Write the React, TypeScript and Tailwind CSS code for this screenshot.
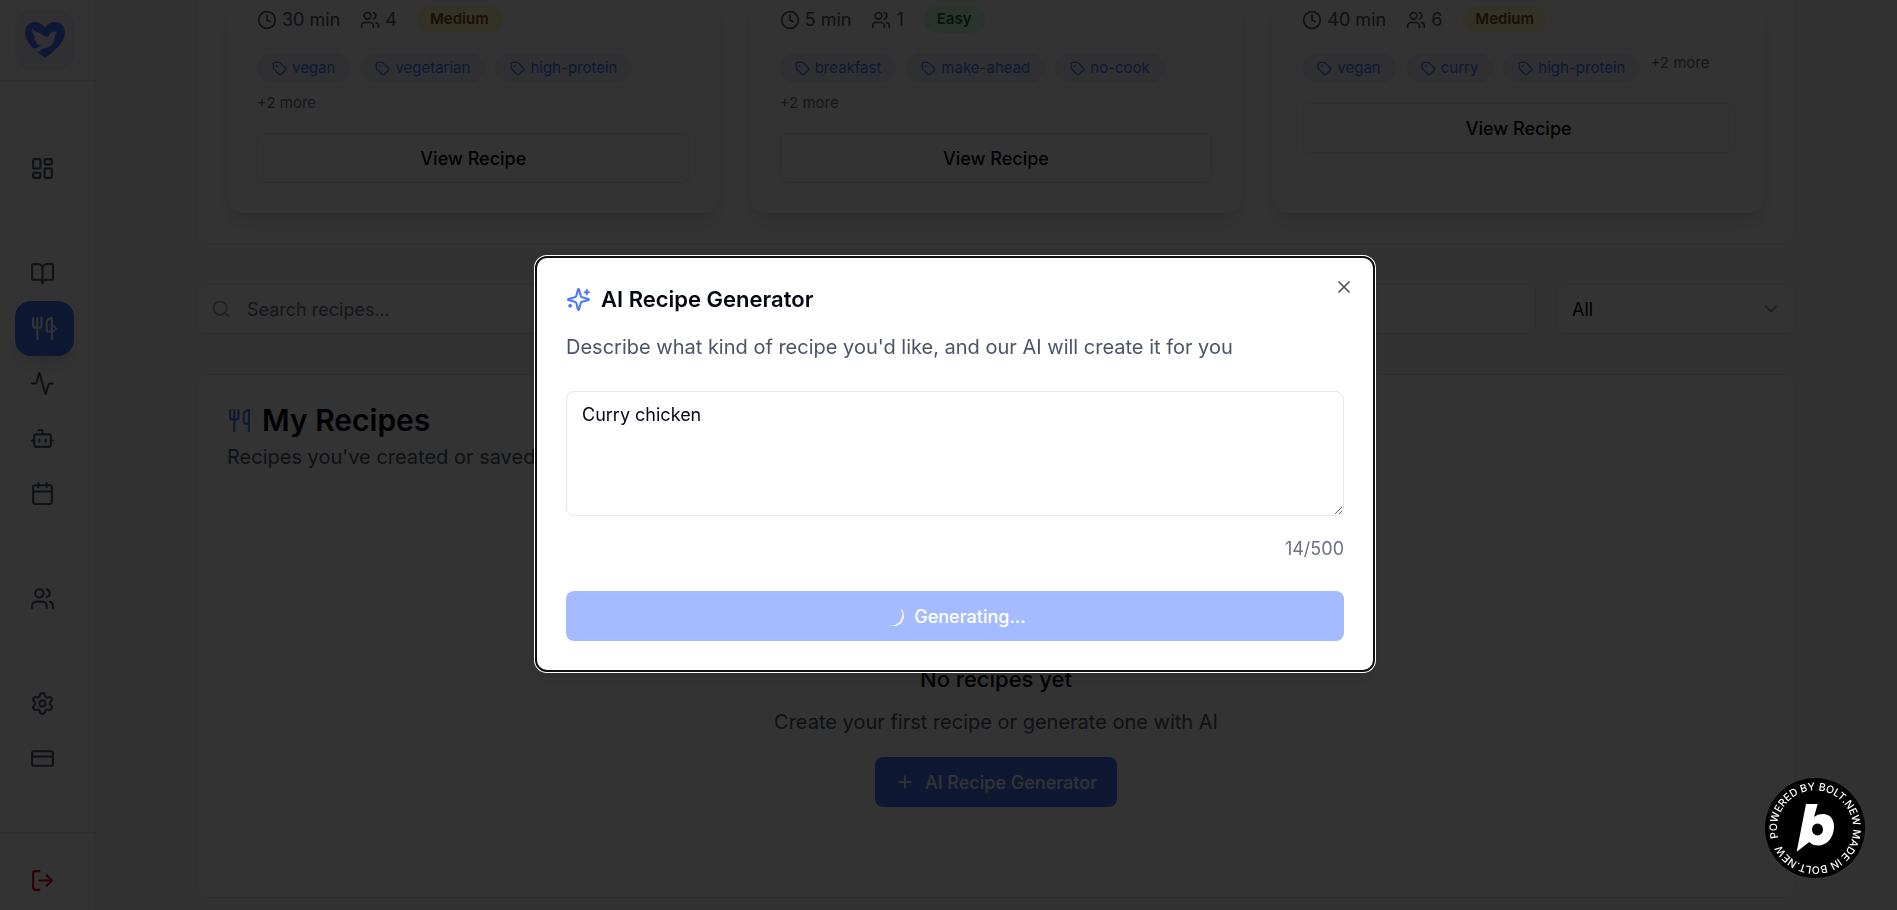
import React from "react";
import {
  Activity,
  BookOpen,
  Bot,
  Calendar,
  ChevronDown,
  ChevronRight,
  Clock,
  CreditCard,
  LayoutDashboard,
  LogOut,
  Plus,
  Search,
  Settings,
  Tag,
  Users,
  Utensils,
  X,
} from "lucide-react";

const recipes = [
  { time: "30 min", servings: 4, level: "Medium", tags: ["vegan", "vegetarian", "high-protein"] },
  { time: "5 min", servings: 1, level: "Easy", tags: ["breakfast", "make-ahead", "no-cook"] },
  { time: "40 min", servings: 6, level: "Medium", tags: ["vegan", "curry", "high-protein"] },
];

const navGroups = [
  [{ label: "Dashboard", icon: LayoutDashboard }],
  [
    { label: "Journal", icon: BookOpen },
    { label: "Recipes", icon: Utensils, active: true },
    { label: "Activity", icon: Activity },
    { label: "Assistant", icon: Bot },
    { label: "Calendar", icon: Calendar },
  ],
  [{ label: "Community", icon: Users }],
  [
    { label: "Settings", icon: Settings },
    { label: "Billing", icon: CreditCard },
  ],
];

function Logo() {
  return (
    <svg viewBox="0 0 40 36" className="w-10 h-9" aria-hidden="true">
      <path
        d="M20 5.500C22.500 2 26 0 30 0c6 0 10 4.500 10 10.500C40 21 28 30 20 36 12 30 0 21 0 10.500 0 4.500 4 0 10 0c4 0 7.500 2 10 5.500z"
        fill="#4b78ff"
      />
      <path
        d="M7 6.500c2 3 8 4 11.500 7 2 1.700 4.500 2 6-.5 1-2 1.500-3.500 4-3.500 1.800 0 2.500.8 3.500 2.500-2 0-2.500 1-2.500 3 0 5-2 9-7 10.500-5 1-6.500 2-9.500 4.500l-5-3.500c3 0 6.500-1 8-3.500-3-.2-5-1.500-5.500-3h2c-2.300-1-3.800-2.400-4-4h2C8.500 14 7 10.500 7 6.500z"
        fill="#edf1ff"
      />
    </svg>
  );
}

function SparklesIcon() {
  return (
    <svg
      viewBox="0 0 24 24"
      fill="none"
      stroke="currentColor"
      strokeWidth="2"
      strokeLinecap="round"
      strokeLinejoin="round"
      className="size-[25px] text-[#4b78ff]"
      aria-hidden="true"
    >
      <path d="M9.937 15.5A2 2 0 0 0 8.5 14.063l-6.135-1.582a.5.5 0 0 1 0-.962L8.5 9.936A2 2 0 0 0 9.937 8.5l1.582-6.135a.5.5 0 0 1 .963 0L14.063 8.5A2 2 0 0 0 15.5 9.937l6.135 1.581a.5.5 0 0 1 0 .964L15.5 14.063a2 2 0 0 0-1.437 1.437l-1.582 6.135a.5.5 0 0 1-.963 0z" />
      <path d="M20 3v4" />
      <path d="M22 5h-4" />
      <path d="M4 17v2" />
      <path d="M5 18H3" />
    </svg>
  );
}

function Sidebar() {
  return (
    <aside className="flex flex-col w-[95px] shrink-0 h-full bg-white border-r border-gray-200">
      <div className="h-[81px] shrink-0 pl-[15px] pt-[10px] border-b border-gray-200">
        <a href="#" aria-label="Home" className="flex items-center justify-center size-[60px] rounded-2xl bg-[#edf1ff]">
          <Logo />
        </a>
      </div>
      <nav className="flex flex-col gap-[50px] flex-1 px-[15px] pt-[60px]">
        {navGroups.map((group, i) => (
          <div key={i} className="flex flex-col">
            {group.map((item) => (
              <a
                key={item.label}
                href="#"
                aria-label={item.label}
                className={
                  item.active
                    ? "relative flex items-center h-[55px] w-[59px] pl-[15px] rounded-2xl bg-[#4b78ff] text-white shadow-[0_12px_19px_-4px_rgb(0_0_0/0.1),0_5px_8px_-5px_rgb(0_0_0/0.1)]"
                    : "relative flex items-center h-[55px] w-[59px] pl-[15px] rounded-2xl text-gray-600"
                }
              >
                <item.icon className="size-[25px] shrink-0" />
                {item.active && <ChevronRight className="absolute right-3 size-[15px]" />}
              </a>
            ))}
          </div>
        ))}
      </nav>
      <div className="h-[78px] shrink-0 px-[15px] pt-5 border-t border-gray-200">
        <button aria-label="Log out" className="flex items-center h-[55px] w-[59px] pl-[15px] text-red-600">
          <LogOut className="size-[25px]" />
        </button>
      </div>
    </aside>
  );
}

function RecipeCard({ recipe }) {
  return (
    <article className="rounded-b-2xl bg-white px-[30px] pt-[6px] pb-[30px] shadow-[0_12px_19px_-4px_rgb(0_0_0/0.1),0_5px_8px_-5px_rgb(0_0_0/0.1)]">
      <div className="flex items-center gap-5 mb-5 text-[18px] leading-[25px] text-gray-600">
        <span className="flex items-center gap-[5px]">
          <Clock className="size-5" />
          {recipe.time}
        </span>
        <span className="flex items-center gap-[5px]">
          <Users className="size-5" />
          {recipe.servings}
        </span>
        <span
          className={
            recipe.level === "Easy"
              ? "rounded-full px-[13px] h-[27px] text-[15px] font-semibold bg-[#dcfce7] text-[#166534]"
              : "rounded-full px-[13px] h-[27px] text-[15px] font-semibold bg-[#fef9c3] text-[#854d0e]"
          }
        >
          {recipe.level}
        </span>
      </div>
      <div className="flex flex-wrap gap-[10px] mb-5 text-[15px] leading-5">
        {recipe.tags.map((tag) => (
          <span key={tag} className="flex items-center gap-[5px] h-[30px] px-[15px] rounded-full bg-[#edf1ff] text-[#4b78ff]">
            <Tag className="size-[15px]" />
            {tag}
          </span>
        ))}
        <span className="text-gray-500">+2 more</span>
      </div>
      <button className="w-full h-[50px] rounded-lg border border-gray-200 text-[18px] font-medium">View Recipe</button>
    </article>
  );
}

function BoltBadge() {
  return (
    <a href="#" aria-label="Powered by Bolt.new" className="fixed right-8 bottom-8 z-20 size-[100px]">
      <svg viewBox="0 0 200 200" className="size-full">
        <circle cx="100" cy="100" r="100" fill="#000" />
        <path id="ring" d="M26.600 119.700A76 76 0 1 1 27.500 122.900" fill="none" />
        <text fill="#fff" className="font-['Inter'] text-[21px] font-medium">
          <textPath href="#ring">POWERED BY BOLT.NEW MADE IN BOLT.NEW</textPath>
        </text>
        <path
          d="M82 52h23.400l-7.400 26c5-4 11-6 18-6 14 0 22 10 22 25 0 22-14 38-32 38-7 0-13-2-17.400-7l-25.200 19.400z"
          fill="#fff"
        />
        <ellipse cx="105" cy="103" rx="11" ry="12" fill="#000" />
      </svg>
    </a>
  );
}

function GeneratorDialog() {
  return (
    <div className="fixed inset-0 z-10 flex items-center justify-center bg-black/80 pl-[13px] pt-[18px]">
      <div
        role="dialog"
        aria-labelledby="dialog-title"
        className="relative flex flex-col w-full max-w-[840px] rounded-xl border-2 border-[#101014] bg-white p-[29px] shadow-lg ring-1 ring-white"
      >
        <h2 id="dialog-title" className="flex items-center gap-[10px] text-[22px] leading-[25px] font-semibold">
          <SparklesIcon />
          AI Recipe Generator
        </h2>
        <p className="mt-5 text-xl leading-[30px] text-gray-600">
          Describe what kind of recipe you'd like, and our AI will create it for you
        </p>
        <textarea
          aria-label="Recipe description"
          defaultValue="Curry chicken"
          className="mt-[29px] w-full h-[125px] rounded-lg border border-gray-200 px-[15px] py-[10px] text-[18px] leading-[25px]"
        />
        <div className="mt-5 text-right text-[18px] leading-[25px] text-gray-500">14/500</div>
        <button
          disabled
          className="mt-[30px] flex items-center justify-center gap-[10px] h-[50px] rounded-lg bg-[#4b78ff] text-[18px] font-medium text-white opacity-50"
        >
          <span className="size-5 rounded-full border-b-2 border-white -rotate-60" />
          Generating...
        </button>
        <button aria-label="Close" className="absolute top-[19px] right-[19px] opacity-70">
          <X className="size-5" />
        </button>
      </div>
    </div>
  );
}

export default function App() {
  return (
    <div className="flex h-screen overflow-hidden bg-gray-50 text-gray-950 font-['Inter',sans-serif]">
      <Sidebar />
      <main className="flex-1 min-w-0">
        <div className="flex flex-col gap-10 max-w-[1600px] mx-auto">
          <section className="grid grid-cols-3 gap-[30px] rounded-b-xl border border-t-0 border-gray-200 bg-white px-[30px] pb-[30px]">
            {recipes.map((recipe) => (
              <RecipeCard key={recipe.time} recipe={recipe} />
            ))}
          </section>

          <div className="flex gap-5 text-[18px]">
            <div className="relative flex-1">
              <Search className="absolute left-[15px] top-[15px] size-5 text-gray-400" />
              <input
                type="text"
                aria-label="Search recipes"
                placeholder="Search recipes..."
                className="w-full h-[50px] rounded-lg border border-gray-200 bg-white pl-[50px] placeholder:text-gray-500"
              />
            </div>
            <div className="relative w-60">
              <select aria-label="Filter" className="appearance-none w-full h-[50px] rounded-lg border border-gray-200 bg-white px-[15px]">
                <option>All</option>
              </select>
              <ChevronDown className="absolute right-[15px] top-[15px] size-5 opacity-50 pointer-events-none" />
            </div>
          </div>

          <section className="rounded-xl border border-gray-200 bg-white p-[30px]">
            <h2 className="flex items-center gap-[10px] text-3xl leading-[30px] font-semibold">
              <Utensils className="size-[25px] text-[#4b78ff]" />
              My Recipes
            </h2>
            <p className="mt-[7px] text-xl leading-[30px] text-gray-600">Recipes you've created or saved</p>
            <div className="flex flex-col items-center pt-[190px] pb-[60px]">
              <h3 className="text-[22px] leading-[35px] font-medium">No recipes yet</h3>
              <p className="mt-[10px] text-xl leading-[30px] text-gray-600">Create your first recipe or generate one with AI</p>
              <button className="mt-5 flex items-center gap-[10px] h-[50px] px-5 rounded-lg bg-[#4b78ff] text-[18px] font-medium text-white">
                <Plus className="size-5" />
                AI Recipe Generator
              </button>
            </div>
          </section>
        </div>
      </main>
      <GeneratorDialog />
      <BoltBadge />
    </div>
  );
}
